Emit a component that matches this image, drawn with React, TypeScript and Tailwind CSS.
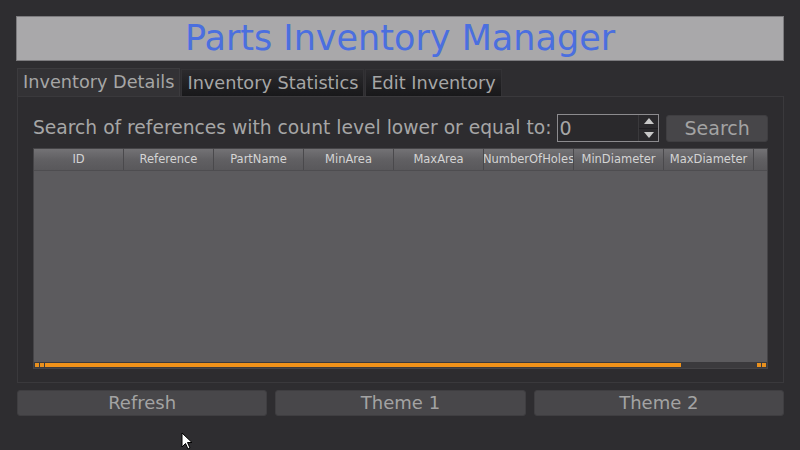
import React from 'react';

const font = { fontFamily: '"DejaVu Sans", "Liberation Sans", sans-serif' };

const columns = ['ID', 'Reference', 'PartName', 'MinArea', 'MaxArea', 'NumberOfHoles', 'MinDiameter', 'MaxDiameter'];

function Tab({ label, active }: { label: string; active?: boolean }) {
  return (
    <div
      className={
        active
          ? 'h-[28px] px-[5px] flex items-center border border-b-0 border-[#3c3b3e] bg-[#333235] text-[17.7px] text-[#a6a6a6] whitespace-nowrap'
          : 'h-[27px] px-[5px] flex items-center border border-b-0 border-[#333235] bg-gradient-to-b from-[#2c2b2e] to-[#18181a] text-[17.7px] text-[#a6a6a6] whitespace-nowrap'
      }
    >
      {label}
    </div>
  );
}

function BottomButton({ label }: { label: string }) {
  return (
    <button className="flex-1 h-[26px] rounded-[3px] bg-[#48474a] border border-[#3f3e41] text-[18px] leading-none text-[#a3a3a3]">
      {label}
    </button>
  );
}

export default function App() {
  return (
    <div className="w-[800px] h-[450px] bg-[#2e2d30] overflow-hidden relative" style={font}>
      <div className="pt-[16px] px-[16px]">
        {/* title */}
        <div className="h-[45px] bg-[#a9a8aa] border border-[#7c7b7e] flex items-center justify-center">
          <span className="text-[35px] leading-none text-[#4b6fdf]">Parts Inventory Manager</span>
        </div>

        {/* tabs */}
        <div className="mt-[7px] pl-[1px] flex items-end gap-[1px]">
          <Tab label="Inventory Details" active />
          <Tab label="Inventory Statistics" />
          <Tab label="Edit Inventory" />
        </div>

        {/* panel */}
        <div className="ml-[1px] h-[287px] border border-[#3a393c] bg-[#2d2c2f] px-[15px] pt-[17px]">
          <div className="flex items-center h-[28px]">
            <span className="text-[18.7px] text-[#a6a6a6] whitespace-nowrap">
              Search of references with count level lower or equal to:
            </span>
            <div className="ml-[5px] w-[103px] h-[28px] border border-[#8c8b8e] bg-[#2a292c] flex items-center justify-between">
              <span className="pl-[2px] text-[19px] text-[#a6a6a6]">0</span>
              <div className="w-[20px] h-full flex flex-col border-l border-[#3a393c]">
                <div className="flex-1 flex items-center justify-center border-b border-[#1f1e21]">
                  <svg width="10" height="6" viewBox="0 0 10 6"><path d="M0 6 L5 0 L10 6 Z" fill="#c8c8c8" /></svg>
                </div>
                <div className="flex-1 flex items-center justify-center">
                  <svg width="10" height="6" viewBox="0 0 10 6"><path d="M0 0 L5 6 L10 0 Z" fill="#c8c8c8" /></svg>
                </div>
              </div>
            </div>
            <button className="ml-[7px] w-[102px] h-[27px] rounded-[3px] bg-[#474649] border border-[#3f3e41] text-[19px] leading-none text-[#a3a3a3]">
              Search
            </button>
          </div>

          {/* table */}
          <div className="mt-[6px] h-[221px] w-[735px] border border-[#454447] bg-[#5c5b5e] flex flex-col">
            <div className="h-[22px] flex bg-gradient-to-b from-[#737275] via-[#616063] to-[#59585b] border-b border-[#4e4d50]">
              {columns.map((c) => (
                <div
                  key={c}
                  className="w-[90px] shrink-0 border-r border-[#4a494c] flex items-center justify-center overflow-hidden whitespace-nowrap text-[11.5px] text-[#d4d4d4]"
                >
                  {c}
                </div>
              ))}
              <div className="flex-1" />
            </div>
            <div className="flex-1" />
            <div className="h-[6px] bg-[#3b3a3d] flex items-center px-[1px]">
              <div className="w-[4px] h-[4px] bg-[#e8901e]" />
              <div className="ml-[1px] w-[4px] h-[4px] bg-[#e8901e]" />
              <div className="ml-[1px] w-[636px] h-[4px] bg-[#f0921a]" />
              <div className="flex-1" />
              <div className="w-[4px] h-[4px] bg-[#e8901e]" />
              <div className="ml-[1px] w-[4px] h-[4px] bg-[#e8901e]" />
            </div>
          </div>
        </div>

        {/* bottom buttons */}
        <div className="mt-[7px] ml-[1px] flex gap-[8px]">
          <BottomButton label="Refresh" />
          <BottomButton label="Theme 1" />
          <BottomButton label="Theme 2" />
        </div>
      </div>

      {/* mouse cursor */}
      <svg className="absolute left-[181px] top-[432px]" width="12" height="18" viewBox="0 0 12 18">
        <path d="M1 1 L1 15 L4.5 11.5 L7 17 L9 16 L6.5 10.5 L11 10.5 Z" fill="#ffffff" stroke="#000000" strokeWidth="1" />
      </svg>
    </div>
  );
}
